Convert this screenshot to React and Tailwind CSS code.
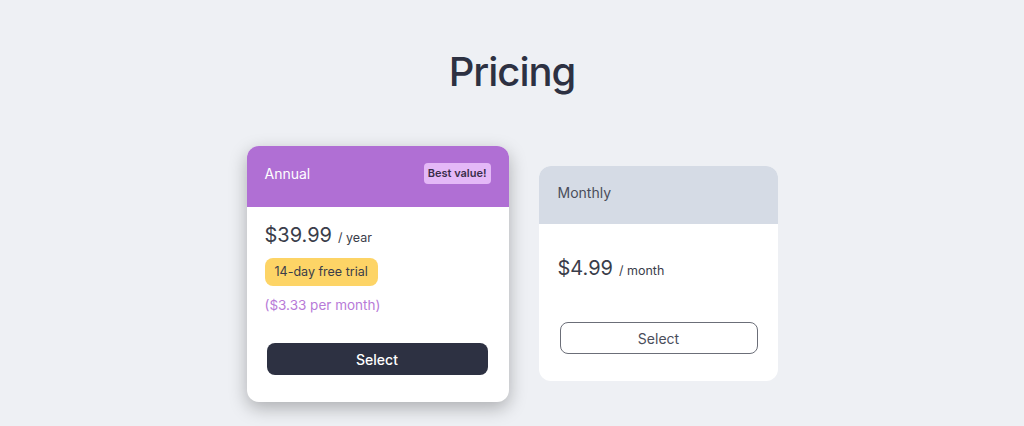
export default function App() {
  return (
    <div
      className="min-h-[426px] bg-[#eef0f4] flex flex-col items-center"
      style={{ fontFamily: 'Inter, "Noto Sans", sans-serif' }}
    >
      <h1 className="mt-[50px] text-[40px] leading-[44px] font-medium text-[#2d3142] tracking-tight">Pricing</h1>

      <div className="mt-[52px] flex items-start gap-[30px]">
        <div className="w-[262px] bg-white rounded-[12px] overflow-hidden shadow-[0_6px_18px_rgba(0,0,0,0.28)]">
          <div className="h-[61px] bg-[#b06fd4] flex items-center justify-between px-[18px] pb-[6px]">
            <span className="text-white text-[14px]">Annual</span>
            <span className="bg-[#e4b8f7] text-[#3a2d4a] text-[11px] font-semibold rounded-[4px] px-[4px] py-[2px]">
              Best value!
            </span>
          </div>
          <div className="px-[18px] pt-[14px] pb-[27px]">
            <div className="flex items-baseline gap-[6px] text-[#3a3d4a]">
              <span className="text-[20px] leading-[28px]">$39.99</span>
              <span className="text-[12.5px]">/ year</span>
            </div>
            <div className="mt-[9px] inline-block bg-[#fdd466] text-[#3a3d4a] text-[12.5px] rounded-[8px] px-[10px] h-[28px] leading-[28px]">
              14-day free trial
            </div>
            <div className="mt-[9px] text-[#b77ad8] text-[13.5px] leading-[20px]">($3.33 per month)</div>
            <button className="mt-[28px] ml-[2px] w-[221px] h-[32px] rounded-[8px] bg-[#2d3142] text-white text-[14px] font-medium">
              Select
            </button>
          </div>
        </div>

        <div className="mt-[20px] w-[239px] bg-white rounded-[12px] overflow-hidden">
          <div className="h-[58px] bg-[#d5dbe5] flex items-center px-[19px] pb-[6px]">
            <span className="text-[#4a4d5a] text-[14px]">Monthly</span>
          </div>
          <div className="px-[19px] pt-[30px] pb-[27px]">
            <div className="flex items-baseline gap-[6px] text-[#3a3d4a]">
              <span className="text-[20px] leading-[28px]">$4.99</span>
              <span className="text-[12.5px]">/ month</span>
            </div>
            <button className="mt-[40px] ml-[2px] w-[198px] h-[32px] rounded-[8px] border border-[#6b6e78] text-[#4a4d5a] text-[14px]">
              Select
            </button>
          </div>
        </div>
      </div>
    </div>
  );
}
